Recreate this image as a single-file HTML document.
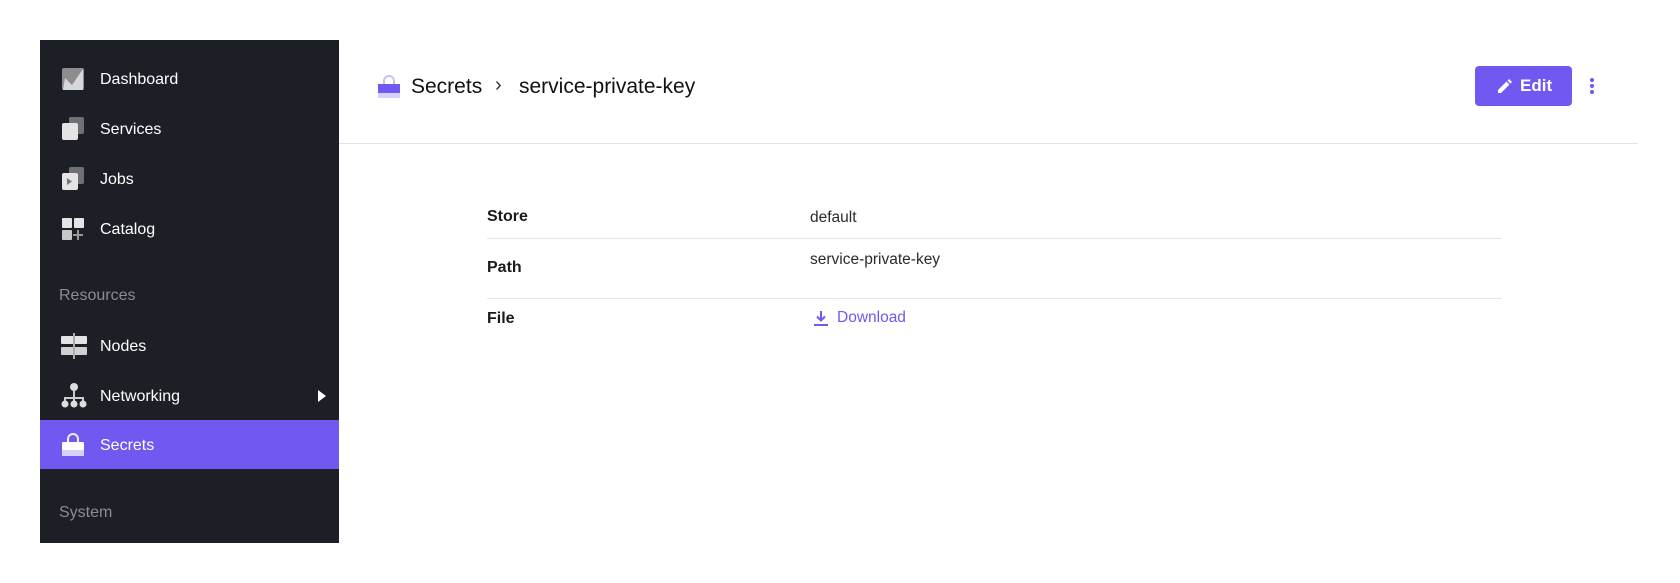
<!DOCTYPE html>
<html><head><style>
body{margin:0;width:1680px;height:583px;background:#fff;font-family:"Liberation Sans",sans-serif;position:relative;overflow:hidden}
.sb{position:absolute;left:40px;top:40px;width:299px;height:503px;background:#1c1f26}
.it{position:absolute;left:0;width:299px;height:49px;color:#fff;font-size:16px}
.it span{position:absolute;left:60px;top:50%;transform:translateY(-45%)}
.it svg{position:absolute;left:21px;top:50%;transform:translateY(-50%)}
.sec{position:absolute;left:19px;color:#8a8d94;font-size:16px}
.act{background:#7158f0}
.lab{position:absolute;left:487px;font-weight:bold;font-size:16px;color:#1a1a1a}
.val{position:absolute;left:810px;font-size:15.5px;color:#2a2a2a}
.ln{position:absolute;left:487px;width:1015px;height:1px;background:#e6e6e6}
</style></head><body>
<div class="sb">
 <div class="it" style="top:14px"><svg width="24" height="24"><rect x="1" y="1" width="22" height="22" rx="2" fill="#8d8d90"/><path d="M4 11l7 7 11-16v21H2z" fill="#d8d8da"/></svg><span>Dashboard</span></div>
 <div class="it" style="top:64px"><svg width="24" height="24"><rect x="8" y="0" width="15" height="17" rx="2" fill="#707074"/><rect x="1" y="6" width="16" height="17" rx="2" fill="#e4e4e6"/></svg><span>Services</span></div>
 <div class="it" style="top:114px"><svg width="24" height="24"><rect x="8" y="0" width="15" height="17" rx="2" fill="#707074"/><rect x="1" y="6" width="16" height="17" rx="2" fill="#e4e4e6"/><path d="M6 11l5 3.5-5 3.5z" fill="#777"/></svg><span>Jobs</span></div>
 <div class="it" style="top:164px"><svg width="24" height="24"><rect x="1" y="1" width="10" height="10" rx="1" fill="#e4e4e6"/><rect x="13" y="1" width="10" height="10" rx="1" fill="#e4e4e6"/><rect x="1" y="13" width="10" height="10" rx="1" fill="#c8c8ca"/><path d="M17 13v10M12 18h10" stroke="#999" stroke-width="2"/></svg><span>Catalog</span></div>
 <div class="sec" style="top:247px">Resources</div>
 <div class="it" style="top:281px"><svg width="26" height="26"><rect x="0" y="3" width="26" height="8" rx="1" fill="#e4e4e6"/><rect x="0" y="14" width="26" height="8" rx="1" fill="#d0d0d2"/><rect x="12" y="0" width="2" height="26" fill="#aaa"/></svg><span>Nodes</span></div>
 <div class="it" style="top:331px"><svg width="26" height="26"><circle cx="13" cy="4" r="4" fill="#ddd"/><path d="M13 8v7M4 18v-3h18v3M13 15v3" stroke="#ccc" stroke-width="2" fill="none"/><circle cx="4" cy="21" r="3.5" fill="#ddd"/><circle cx="13" cy="21" r="3.5" fill="#ddd"/><circle cx="22" cy="21" r="3.5" fill="#ddd"/></svg><span>Networking</span><svg style="left:278px" width="8" height="12"><path d="M0 0l8 6-8 6z" fill="#fff"/></svg></div>
 <div class="it act" style="top:380px"><svg width="24" height="24"><path d="M7 9V6a5 5 0 0110 0v3" stroke="#eee" stroke-width="2" fill="none"/><rect x="1" y="9" width="22" height="14" rx="1" fill="#fff"/><rect x="1" y="17" width="22" height="6" fill="#d8d2fa"/></svg><span>Secrets</span></div>
 <div class="sec" style="top:464px">System</div>
</div>
<svg style="position:absolute;left:377px;top:75px" width="24" height="24"><path d="M7 9V6a5 5 0 0110 0v3" stroke="#c9bff7" stroke-width="2" fill="none"/><rect x="1" y="9" width="22" height="9" fill="#7158f0"/><rect x="1" y="18" width="22" height="5" fill="#d8d2fa"/></svg>
<div style="position:absolute;left:411px;top:75px;font-size:21px;color:#111">Secrets</div>
<div style="position:absolute;left:495px;top:74px;font-size:20px;color:#333">›</div>
<div style="position:absolute;left:519px;top:75px;font-size:21px;color:#111">service-private-key</div>
<div style="position:absolute;left:1475px;top:66px;width:97px;height:40px;background:#7158f0;border-radius:4px;color:#fff;font-size:17px;font-weight:bold"><svg style="position:absolute;left:23px;top:13px" width="14" height="14"><path d="M0 14v-3l8.5-8.5 3 3L3 14zM9.5 1.5L11 0l3 3-1.5 1.5z" fill="#fff"/></svg><span style="position:absolute;left:45px;top:10px">Edit</span></div>
<svg style="position:absolute;left:1588px;top:77px" width="8" height="18"><circle cx="4" cy="3" r="2" fill="#7158f0"/><circle cx="4" cy="9" r="2" fill="#7158f0"/><circle cx="4" cy="15" r="2" fill="#7158f0"/></svg>
<div style="position:absolute;left:339px;top:143px;width:1299px;height:1px;background:#e2e2e2"></div>
<div class="lab" style="top:208px">Store</div><div class="val" style="top:209px">default</div>
<div class="ln" style="top:238px"></div>
<div class="lab" style="top:259px">Path</div><div class="val" style="top:251px">service-private-key</div>
<div class="ln" style="top:298px"></div>
<div class="lab" style="top:310px">File</div>
<svg style="position:absolute;left:813px;top:310px" width="16" height="16"><path d="M8 1v9M4 6.5l4 4 4-4M1 15h14" stroke="#7158f0" stroke-width="2" fill="none"/></svg>
<div class="val" style="top:309px;left:837px;color:#7158f0">Download</div>
</body></html>
